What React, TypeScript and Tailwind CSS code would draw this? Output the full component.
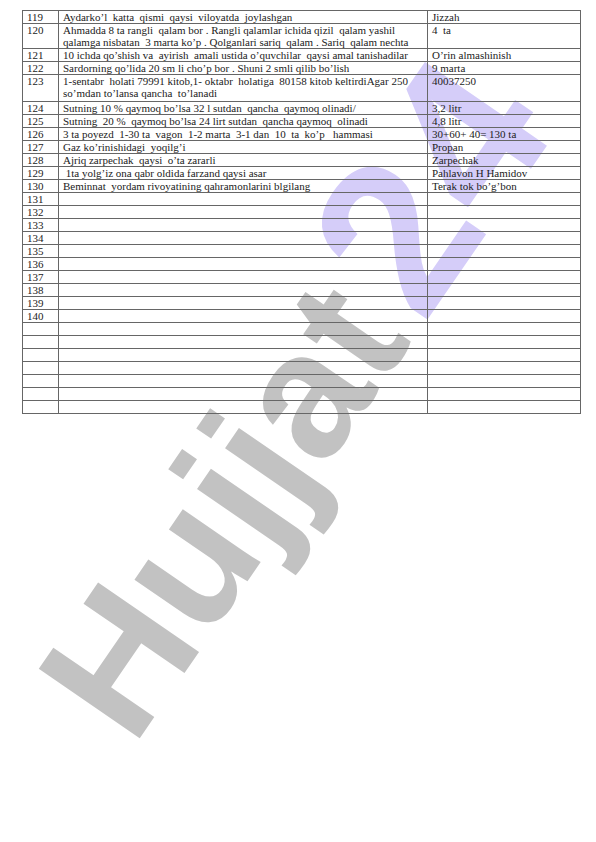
const rows: { n: string; q: React.ReactNode; a: string; h: string }[] = [
  { n: '119', q: 'Aydarko’l  katta  qismi  qaysi  viloyatda  joylashgan', a: 'Jizzah', h: 'h-[11.5px]' },
  {
    n: '120',
    q: (
      <>
        Ahmadda 8 ta rangli  qalam bor . Rangli qalamlar ichida qizil  qalam yashil
        <br />
        qalamga nisbatan  3 marta ko’p . Qolganlari sariq  qalam . Sariq  qalam nechta
      </>
    ),
    a: '4  ta',
    h: 'h-[25px]',
  },
  { n: '121', q: '10 ichda qo’shish va  ayirish  amali ustida o’quvchilar  qaysi amal tanishadilar', a: 'O’rin almashinish', h: 'h-[12.5px]' },
  { n: '122', q: 'Sardorning qo’lida 20 sm li cho’p bor . Shuni 2 smli qilib bo’lish', a: '9 marta', h: 'h-[12.5px]' },
  {
    n: '123',
    q: (
      <>
        1-sentabr  holati 79991 kitob,1- oktabr  holatiga  80158 kitob keltirdiAgar 250
        <br />
        so’mdan to’lansa qancha  to’lanadi
      </>
    ),
    a: '40037250',
    h: 'h-[27px]',
  },
  { n: '124', q: 'Sutning 10 % qaymoq bo’lsa 32 l sutdan  qancha  qaymoq olinadi/', a: '3,2 litr', h: 'h-[12.5px]' },
  { n: '125', q: 'Sutning  20 %  qaymoq bo’lsa 24 lirt sutdan  qancha qaymoq  olinadi', a: '4,8 litr', h: 'h-[12.5px]' },
  { n: '126', q: '3 ta poyezd  1-30 ta  vagon  1-2 marta  3-1 dan  10  ta  ko’p   hammasi', a: '30+60+ 40= 130 ta', h: 'h-[12.5px]' },
  { n: '127', q: 'Gaz ko’rinishidagi  yoqilg’i', a: 'Propan', h: 'h-[12.5px]' },
  { n: '128', q: 'Ajriq zarpechak  qaysi  o’ta zararli', a: 'Zarpechak', h: 'h-[12.5px]' },
  { n: '129', q: ' 1ta yolg’iz ona qabr oldida farzand qaysi asar', a: 'Pahlavon H Hamidov', h: 'h-[12.5px]' },
  { n: '130', q: 'Beminnat  yordam rivoyatining qahramonlarini blgilang', a: 'Terak tok bo’g’bon', h: 'h-[12.5px]' },
];

const numbered = ['131', '132', '133', '134', '135', '136', '137', '138', '139', '140'];

export default function App() {
  return (
    <div className="relative w-[596px] h-[842px] bg-white overflow-hidden">
      {/* watermark sits under the table lines */}
      <svg className="absolute inset-0 z-0 pointer-events-none" width="596" height="842">
        <text
          x="133"
          y="748"
          transform="rotate(-55.5 133 748)"
          fontFamily="'Liberation Sans', Arial, sans-serif"
          fontWeight="700"
          fontSize="178"
        >
          <tspan fill="#c2c2c2">Hujjat</tspan>
          <tspan fill="#d5cdf9" fontSize="215" dx="18">24</tspan>
        </text>
      </svg>

      <div className="relative z-10 pt-[10px] pl-[22px]">
        <table className="w-[558px] table-fixed border-collapse font-['Liberation_Serif',serif] text-[11px] leading-[12px] text-[#222]">
          <colgroup>
            <col className="w-[36px]" />
            <col className="w-[369px]" />
            <col className="w-[153px]" />
          </colgroup>
          <tbody>
            {rows.map((r) => (
              <tr key={r.n}>
                <td className={`${r.h} border border-[#666] px-[4px] py-0 align-top`}>{r.n}</td>
                <td className="border border-[#666] px-[4px] py-0 align-top whitespace-pre-wrap">{r.q}</td>
                <td className="border border-[#666] px-[4px] py-0 align-top whitespace-pre-wrap">{r.a}</td>
              </tr>
            ))}
            {numbered.map((n) => (
              <tr key={n}>
                <td className="h-[12.5px] border border-[#666] px-[4px] py-0 align-top">{n}</td>
                <td className="border border-[#666]" />
                <td className="border border-[#666]" />
              </tr>
            ))}
            {[0, 1, 2, 3, 4, 5, 6].map((i) => (
              <tr key={'e' + i}>
                <td className="h-[13px] border border-[#666]" />
                <td className="border border-[#666]" />
                <td className="border border-[#666]" />
              </tr>
            ))}
          </tbody>
        </table>
      </div>
    </div>
  );
}
